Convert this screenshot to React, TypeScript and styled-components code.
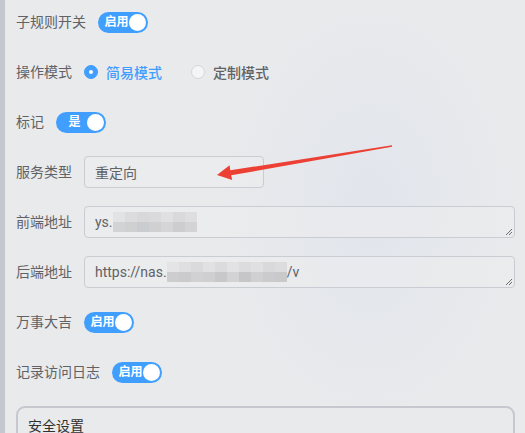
import React from "react";
import styled, { createGlobalStyle } from "styled-components";

const Global = createGlobalStyle`
  html, body { margin: 0; padding: 0; }
  body {
    width: 525px; height: 433px; overflow: hidden;
    background: #e9eaec;
    font-family: "Helvetica Neue", Roboto, "Noto Sans CJK SC", sans-serif;
  }
`;

const Page = styled.div`
  position: relative;
  width: 525px;
  height: 433px;
  box-sizing: border-box;
  border-left: 5px solid #c4c7ce;
  padding: 6px 10px 0 11px;
  overflow: hidden;
  background:
    radial-gradient(ellipse 150px 220px at 365px 210px, rgba(220, 226, 236, 0.6), rgba(220, 226, 236, 0) 100%),
    #e9eaec;
`;

const Item = styled.div`
  display: flex;
  align-items: center;
  height: 32px;
  margin-bottom: 18px;
`;

const Label = styled.div`
  font-size: 14px;
  color: #606266;
  margin-right: 12px;
  white-space: nowrap;
  line-height: 32px;
`;

const Switch = styled.div`
  display: inline-flex;
  align-items: center;
  justify-content: space-between;
  box-sizing: border-box;
  width: 50px;
  height: 21px;
  border-radius: 11px;
  background: #409eff;
  padding: 0 2px 0 6px;
`;

const SwitchText = styled.span`
  color: #fff;
  font-size: 12px;
  font-weight: 700;
  line-height: 1;
  flex: 1;
  text-align: center;
`;

const Knob = styled.span`
  width: 17px;
  height: 17px;
  border-radius: 50%;
  background: #fff;
  flex: none;
`;

const RadioGroup = styled.div`
  display: flex;
  align-items: center;
`;

const Radio = styled.label<{ $checked?: boolean }>`
  display: inline-flex;
  align-items: center;
  margin-right: 29px;
  font-size: 14px;
  font-weight: 500;
  color: ${(p) => (p.$checked ? "#409eff" : "#606266")};
`;

const Dot = styled.span<{ $checked?: boolean }>`
  box-sizing: border-box;
  width: 14px;
  height: 14px;
  border-radius: 50%;
  margin-right: 8px;
  border: 1px solid ${(p) => (p.$checked ? "#409eff" : "#d3d6dc")};
  background: ${(p) => (p.$checked ? "#409eff" : "#f4f5f7")};
  display: inline-flex;
  align-items: center;
  justify-content: center;
  &::after {
    content: "";
    width: 4px;
    height: 4px;
    border-radius: 50%;
    background: #fff;
    display: ${(p) => (p.$checked ? "block" : "none")};
  }
`;

const Field = styled.div<{ $width?: string }>`
  position: relative;
  box-sizing: border-box;
  width: ${(p) => p.$width || "100%"};
  flex: ${(p) => (p.$width ? "none" : "1")};
  height: 32px;
  border: 1px solid #c9ccd2;
  border-radius: 4px;
  padding: 0 10px;
  display: flex;
  align-items: center;
  font-size: 14px;
  color: #606266;
  background: rgba(236, 237, 239, 0.6);
`;

const Mosaic = styled.span`
  display: inline-grid;
  grid-auto-flow: column;
  grid-template-rows: 10px 10px;
  align-self: center;
`;

const Cell = styled.span<{ $c: string }>`
  width: 12px;
  height: 10px;
  background: ${(p) => p.$c};
`;

const Grip = styled.svg`
  position: absolute;
  right: 1px;
  bottom: 1px;
`;

const Fieldset = styled.div`
  box-sizing: border-box;
  border: 2px solid #c5c8ce;
  border-radius: 9px;
  height: 60px;
  padding: 8px 10px;
  font-size: 14px;
  line-height: 20px;
  color: #303133;
`;

const Arrow = styled.svg`
  position: absolute;
  left: 0;
  top: 0;
  pointer-events: none;
`;

function Toggle({ text }: { text: string }) {
  return (
    <Switch>
      <SwitchText>{text}</SwitchText>
      <Knob />
    </Switch>
  );
}

function MosaicBlock({ cols }: { cols: string[][] }) {
  return (
    <Mosaic>
      {cols.map((col, i) =>
        col.map((c, j) => <Cell key={`${i}-${j}`} $c={c} />)
      )}
    </Mosaic>
  );
}

function ResizeGrip() {
  return (
    <Grip width="9" height="9" viewBox="0 0 9 9">
      <path d="M8 2 L2 8 M8 5 L5 8" stroke="#6b6d72" strokeWidth="1" />
    </Grip>
  );
}

export default function App() {
  const m1 = [
    ["#e2e3e5", "#d2d3d5"],
    ["#dcdcde", "#cfd0d2"],
    ["#d8d8da", "#cbcccf"],
    ["#dadadc", "#d0d0d3"],
    ["#e0e0e2", "#d5d5d7"],
    ["#d9d9db", "#cdcdcf"],
    ["#dedee0", "#d3d3d5"],
  ];
  const m2 = [
    ["#e4e4e6", "#cdcdcf"],
    ["#dfdfe1", "#cbcbcd"],
    ["#dadadc", "#d1d1d3"],
    ["#e1e1e3", "#cfcfd1"],
    ["#dbdbdd", "#c8c8ca"],
    ["#e2e2e4", "#d3d3d5"],
    ["#dcdcde", "#c6c6c8"],
    ["#e0e0e2", "#d0d0d2"],
    ["#d9d9db", "#cbcbcd"],
    ["#dcdcde", "#c9c9cb"],
  ];
  return (
    <>
      <Global />
      <Page>
        <Item>
          <Label>子规则开关</Label>
          <Toggle text="启用" />
        </Item>
        <Item>
          <Label>操作模式</Label>
          <RadioGroup>
            <Radio $checked>
              <Dot $checked />
              简易模式
            </Radio>
            <Radio>
              <Dot />
              定制模式
            </Radio>
          </RadioGroup>
        </Item>
        <Item>
          <Label>标记</Label>
          <Toggle text="是" />
        </Item>
        <Item>
          <Label>服务类型</Label>
          <Field $width="180px">重定向</Field>
        </Item>
        <Item>
          <Label>前端地址</Label>
          <Field>
            ys.
            <MosaicBlock cols={m1} />
            <ResizeGrip />
          </Field>
        </Item>
        <Item>
          <Label>后端地址</Label>
          <Field>
            https://nas.
            <MosaicBlock cols={m2} />
            /v
            <ResizeGrip />
          </Field>
        </Item>
        <Item>
          <Label>万事大吉</Label>
          <Toggle text="启用" />
        </Item>
        <Item>
          <Label>记录访问日志</Label>
          <Toggle text="启用" />
        </Item>
        <Fieldset>安全设置</Fieldset>
        <Arrow width="525" height="433" viewBox="0 0 525 433">
          <polygon
            points="212,175 224.6,165.3 225.3,170.3 387,145.3 387,146.8 226.2,175.3 227.2,180"
            fill="#ec4034"
          />
        </Arrow>
      </Page>
    </>
  );
}
